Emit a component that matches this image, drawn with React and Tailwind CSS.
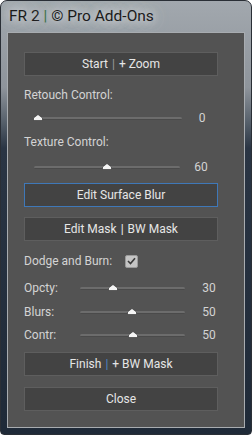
import React from 'react';

const font = { fontFamily: 'Roboto, "Noto Sans", sans-serif' };

function Thumb() {
  return (
    <svg width="10" height="7" viewBox="0 0 10 7" className="block">
      <path d="M5 0.5 L9.5 4 L9.5 6.5 L0.5 6.5 L0.5 4 Z" fill="#f4f4f4" stroke="#2a2a2a" strokeWidth="0.6" />
    </svg>
  );
}

function Track({ pos, width }) {
  return (
    <div className="relative h-[16px] shrink-0" style={{ width }}>
      <div className="absolute left-0 right-0 top-[7px] h-[3px] rounded-full bg-[#6c6c6c] border-b border-[#4a4a4a]" />
      <div className="absolute top-[4px]" style={{ left: pos - 5 }}>
        <Thumb />
      </div>
    </div>
  );
}

function Button({ children, active }) {
  return (
    <div
      className={
        'w-[194px] h-[24px] flex items-center justify-center text-[12px] text-[#e6e6e6] bg-[#434343] border ' +
        (active ? 'border-[#3f78b8]' : 'border-[#5e5e5e]')
      }
    >
      {children}
    </div>
  );
}

function Sep({ color }) {
  return <span className={'mx-[4px] ' + color}>|</span>;
}

function SmallSlider({ label, pos, value, mt }) {
  return (
    <div className={'flex items-center h-[16px] ' + mt}>
      <span className="w-[56px] text-[12px] text-[#d4d4d4]">{label}</span>
      <Track pos={pos} width={105} />
      <span className="w-[48px] text-center text-[12px] text-[#d4d4d4]">{value}</span>
    </div>
  );
}

export default function App() {
  return (
    <div
      className="w-[252px] h-[435px] rounded-t-[7px] rounded-b-[4px] border border-[#2a2f36] bg-[linear-gradient(to_bottom,#a2a8ae_0%,#8e949b_20%,#56606b_28%,#2a3544_34%,#1f2a38_100%)] flex flex-col overflow-hidden"
      style={font}
    >
      <div className="h-[31px] flex items-center pl-[8px] shrink-0">
        <span className="text-[15.5px] text-[#1b1b1b] [text-shadow:0_0_8px_rgba(230,232,235,0.95),0_0_14px_rgba(220,223,226,0.9),0_0_20px_rgba(210,214,218,0.8)]">
          FR 2 <span className="text-[#2f6b3c]">|</span> © Pro Add-Ons
        </span>
      </div>
      <div className="mx-[6px] border border-[#a8acb0] bg-[#535353] pl-[16px] pt-[19px] h-[396px] flex flex-col">
        <Button>
          Start <Sep color="text-[#9c9c9c]" /> + Zoom
        </Button>

        <div className="mt-[11px] h-[16px] flex items-center text-[12px] text-[#d4d4d4]">Retouch Control:</div>
        <div className="mt-[7px] flex items-center h-[16px]">
          <div className="w-[10px]" />
          <Track pos={4} width={148} />
          <span className="w-[40px] text-center text-[12px] text-[#d4d4d4]">0</span>
        </div>

        <div className="mt-[8px] h-[16px] flex items-center text-[12px] text-[#d4d4d4]">Texture Control:</div>
        <div className="mt-[9px] flex items-center h-[16px]">
          <div className="w-[10px]" />
          <Track pos={73} width={146} />
          <span className="w-[42px] text-center text-[12px] text-[#d4d4d4]">60</span>
        </div>

        <div className="mt-[8px]">
          <Button active>Edit Surface Blur</Button>
        </div>
        <div className="mt-[10px]">
          <Button>
            Edit Mask <Sep color="text-[#f0f0f0]" /> BW Mask
          </Button>
        </div>

        <div className="mt-[12px] h-[16px] flex items-center">
          <span className="w-[101px] text-[12px] text-[#d4d4d4]">Dodge and Burn:</span>
          <div className="w-[13px] h-[13px] rounded-[2px] bg-[#c4c4c4] border border-[#9a9a9a] flex items-center justify-center">
            <svg width="9" height="8" viewBox="0 0 9 8">
              <path d="M1 4 L3.5 6.5 L8 1.2" fill="none" stroke="#3a3a3a" strokeWidth="1.6" />
            </svg>
          </div>
        </div>

        <SmallSlider label="Opcty:" pos={33} value="30" mt="mt-[11px]" />
        <SmallSlider label="Blurs:" pos={52} value="50" mt="mt-[8px]" />
        <SmallSlider label="Contr:" pos={53} value="50" mt="mt-[7px]" />

        <div className="mt-[9px]">
          <Button>
            Finish <Sep color="text-[#4b84c6]" /> + BW Mask
          </Button>
        </div>
        <div className="mt-[11px]">
          <Button>Close</Button>
        </div>
      </div>
    </div>
  );
}
